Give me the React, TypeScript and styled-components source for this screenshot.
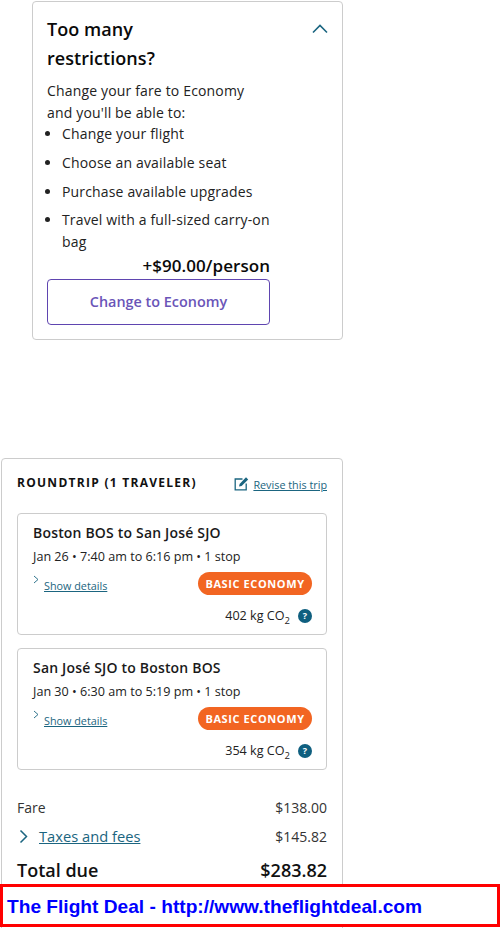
import React from "react";
import styled, { createGlobalStyle } from "styled-components";

const Global = createGlobalStyle`
  html, body { margin: 0; padding: 0; background: #fff; }
  body { font-family: "Open Sans", "Liberation Sans", sans-serif; color: #111; }
`;

const Page = styled.div`
  position: relative;
  width: 500px;
  height: 928px;
  overflow: hidden;
  padding-top: 1px;
  box-sizing: border-box;
`;

const UpsellCard = styled.section`
  box-sizing: border-box;
  width: 311px;
  height: 339px;
  margin-left: 32px;
  padding: 13px 14px 14px 14px;
  border: 1px solid #ccc;
  border-radius: 4px;
  position: relative;
  display: flex;
  flex-direction: column;
`;

const UpsellHead = styled.div`
  display: flex;
  justify-content: space-between;
  align-items: flex-start;
`;

const UpsellTitle = styled.h2`
  margin: 0;
  width: 170px;
  font-size: 18px;
  line-height: 29px;
  font-weight: 600;
  letter-spacing: 0.05px;
  color: #0a0a0a;
`;

const ChevronUp = styled.svg`
  width: 16px;
  height: 10px;
  margin-top: 9px;
  flex: none;
`;

const UpsellBody = styled.div`
  width: 223px;
  font-size: 14px;
  line-height: 21.5px;
  letter-spacing: 0.16px;
  color: #222;
`;

const Intro = styled.p`
  margin: 7px 0 0;
  width: 205px;
`;

const Perks = styled.ul`
  margin: 0;
  padding: 0 0 0 15px;
`;

const Perk = styled.li`
  margin-bottom: 7.3px;
  &:last-child { margin-bottom: 0; }
`;

const Price = styled.div`
  width: 223px;
  text-align: right;
  font-size: 17px;
  line-height: 24px;
  font-weight: 600;
  letter-spacing: 0.05px;
  color: #0a0a0a;
  margin-top: 2px;
`;

const ChangeButton = styled.button`
  box-sizing: border-box;
  width: 223px;
  height: 46px;
  margin-top: 1px;
  padding: 0 0 2px;
  background: #fff;
  border: 1px solid #5f45b0;
  border-radius: 4px;
  font-family: inherit;
  font-size: 14.4px;
  font-weight: 600;
  color: #6a55b8;
`;

const SummaryCard = styled.section`
  box-sizing: border-box;
  width: 342px;
  margin: 118px 0 0 1px;
  padding: 12px 15px 0 15px;
  border: 1px solid #ccc;
  border-radius: 4px 4px 0 0;
  height: 480px;
`;

const SummaryHead = styled.div`
  display: flex;
  justify-content: space-between;
  align-items: center;
  height: 24px;
`;

const SummaryTitle = styled.h3`
  margin: 0 0 2px;
  font-size: 12px;
  font-weight: 700;
  letter-spacing: 1.27px;
  color: #111;
`;

const Revise = styled.div`
  display: flex;
  align-items: center;
  gap: 4px;
`;

const TextLink = styled.a`
  font-size: 10.8px;
  color: #1b6580;
  text-decoration: underline;
  line-height: 14px;
`;

const ReviseLink = styled(TextLink)`
  margin-top: 3px;
`;

const Flight = styled.article`
  box-sizing: border-box;
  height: 122px;
  margin-top: 18px;
  padding: 8px 14px 0 15px;
  border: 1px solid #ccc;
  border-radius: 4px;
  & + & { margin-top: 13px; }
`;

const Route = styled.div`
  font-size: 14px;
  line-height: 22px;
  font-weight: 600;
  letter-spacing: 0.18px;
  color: #1a1a1a;
`;

const Times = styled.div`
  font-size: 12.6px;
  line-height: 18px;
  margin-top: 4px;
  color: #222;
`;

const DetailRow = styled.div`
  display: flex;
  justify-content: space-between;
  align-items: center;
  margin-top: 6px;
  height: 23px;
`;

const ShowDetails = styled.div`
  display: flex;
  align-items: flex-start;
  gap: 5px;
`;

const SmallChevron = styled.svg`
  width: 6px;
  height: 10px;
  flex: none;
`;

const DetailsLink = styled(TextLink)`
  margin-top: 4px;
`;

const Badge = styled.span`
  box-sizing: border-box;
  height: 23px;
  width: 114px;
  border-radius: 12px;
  background: #f26522;
  color: #fff;
  font-size: 11px;
  font-weight: 700;
  letter-spacing: 0.6px;
  display: flex;
  align-items: center;
  justify-content: center;
`;

const Emissions = styled.div`
  display: flex;
  justify-content: flex-end;
  align-items: center;
  gap: 8px;
  margin-top: 12px;
  font-size: 12.6px;
  line-height: 18px;
  color: #222;
  sub { font-size: 9.5px; line-height: 0; }
`;

const Help = styled.span`
  width: 14px;
  height: 14px;
  border-radius: 50%;
  background: #0f5f7f;
  color: #fff;
  font-size: 9px;
  font-weight: 700;
  display: flex;
  align-items: center;
  justify-content: center;
`;

const Totals = styled.div`
  margin-top: 26px;
`;

const Line = styled.div`
  display: flex;
  justify-content: space-between;
  align-items: center;
  height: 22px;
  font-size: 14px;
  color: #333;
  & + & { margin-top: 7px; }
`;

const Taxes = styled.span`
  display: flex;
  align-items: center;
  gap: 10px;
`;

const TaxChevron = styled.svg`
  width: 10px;
  height: 15px;
  margin-left: 2px;
  flex: none;
`;

const TaxLink = styled.a`
  font-size: 14.7px;
  font-weight: 400;
  color: #1b6580;
  text-decoration: underline;
`;

const TotalLine = styled.div`
  display: flex;
  justify-content: space-between;
  align-items: center;
  margin-top: 10px;
  height: 26px;
  font-size: 18px;
  font-weight: 600;
  color: #111;
`;

const Banner = styled.div`
  position: absolute;
  left: 0;
  top: 884px;
  box-sizing: border-box;
  width: 500px;
  height: 43px;
  padding: 3px 0 0 4px;
  border: 3px solid #f00;
  background: #fff;
  display: flex;
  align-items: center;
  font-family: "Liberation Sans", Arial, sans-serif;
  font-size: 19.15px;
  font-weight: 700;
  color: #00f;
`;

const perks = [
  "Change your flight",
  "Choose an available seat",
  "Purchase available upgrades",
  "Travel with a full-sized carry-on bag",
];

const flights = [
  { route: "Boston BOS to San José SJO", date: "Jan 26 • 7:40 am to 6:16 pm • ", co2: "402" },
  { route: "San José SJO to Boston BOS", date: "Jan 30 • 6:30 am to 5:19 pm • ", co2: "354" },
];

export default function App() {
  return (
    <Page>
      <Global />
      <UpsellCard>
        <UpsellHead>
          <UpsellTitle>Too many restrictions?</UpsellTitle>
          <ChevronUp viewBox="0 0 16 10" fill="none" stroke="#1b6580" strokeWidth="1.6">
            <path d="M1 8.5 8 1.5l7 7" />
          </ChevronUp>
        </UpsellHead>
        <UpsellBody>
          <Intro>Change your fare to Economy and you'll be able to:</Intro>
          <Perks>
            {perks.map((p) => (
              <Perk key={p}>{p}</Perk>
            ))}
          </Perks>
        </UpsellBody>
        <Price>+$90.00/person</Price>
        <ChangeButton>Change to Economy</ChangeButton>
      </UpsellCard>

      <SummaryCard>
        <SummaryHead>
          <SummaryTitle>ROUNDTRIP (1 TRAVELER)</SummaryTitle>
          <Revise>
            <svg width="15" height="15" viewBox="0 0 15 15" fill="none">
              <path d="M8.5 3H1.2v10.8h11V7.5" stroke="#1b6580" strokeWidth="1.3" />
              <path d="M5 10.5 5.6 8 12 1.2l2.2 2.2L7.6 10z" fill="#1b6580" />
            </svg>
            <ReviseLink>Revise this trip</ReviseLink>
          </Revise>
        </SummaryHead>

        {flights.map((f) => (
          <Flight key={f.route}>
            <Route>{f.route}</Route>
            <Times>
              {f.date}1 stop
            </Times>
            <DetailRow>
              <ShowDetails>
                <SmallChevron viewBox="0 0 6 10" fill="none" stroke="#1b6580" strokeWidth="0.9">
                  <path d="M1 1l4 3.5L1 8" />
                </SmallChevron>
                <DetailsLink>Show details</DetailsLink>
              </ShowDetails>
              <Badge>BASIC ECONOMY</Badge>
            </DetailRow>
            <Emissions>
              <span>
                {f.co2} kg CO<sub>2</sub>
              </span>
              <Help>?</Help>
            </Emissions>
          </Flight>
        ))}

        <Totals>
          <Line>
            <span>Fare</span>
            <span>$138.00</span>
          </Line>
          <Line>
            <Taxes>
              <TaxChevron viewBox="0 0 10 15" fill="none" stroke="#1b6580" strokeWidth="1.5">
                <path d="M1.5 1.5l6 6-6 6" />
              </TaxChevron>
              <TaxLink>Taxes and fees</TaxLink>
            </Taxes>
            <span>$145.82</span>
          </Line>
          <TotalLine>
            <span>Total due</span>
            <span>$283.82</span>
          </TotalLine>
        </Totals>
      </SummaryCard>

      <Banner>The Flight Deal - http://www.theflightdeal.com</Banner>
    </Page>
  );
}
